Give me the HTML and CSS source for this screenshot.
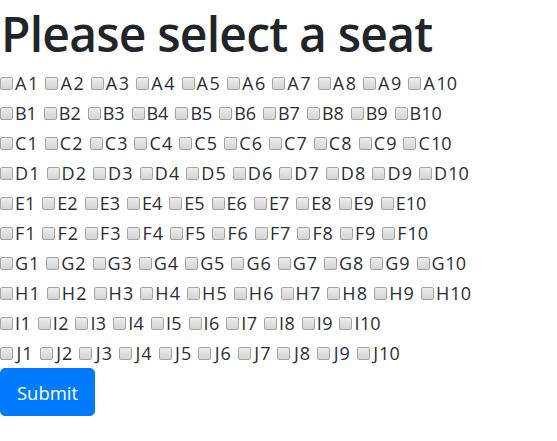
FILE: index.html
```html
<!DOCTYPE html>
<html>
<head>
<meta charset="utf-8">
<link rel="stylesheet" href="styles.css">
</head>
<body>
<h1 class="title">Please select a seat</h1>
<form class="seats"></form>
<script>
(function(){
  var form = document.querySelector('.seats');
  'ABCDEFGHIJ'.split('').forEach(function(r){
    var row = document.createElement('div');
    row.className = 'row row-' + r.toLowerCase();
    for (var i = 1; i <= 10; i++) {
      var s = document.createElement('label');
      s.className = 'seat';
      s.innerHTML = '<input type="checkbox" class="cb" name="seat" value="' + r + i + '"><span class="name"><span class="ltr">' + r + '</span>' + i + '</span>';
      row.appendChild(s);
    }
    form.appendChild(row);
  });
  var b = document.createElement('button');
  b.className = 'btn';
  b.type = 'button';
  b.textContent = 'Submit';
  form.appendChild(b);
})();
</script>
</body>
</html>
```
FILE: styles.css
```css
html, body {
  margin: 0;
  padding: 0;
  background: #fff;
}
body {
  font-family: "Open Sans", "Noto Sans", sans-serif;
  color: #212529;
  font-size: 18px;
}
.title {
  margin: 0;
  font-family: "Open Sans", sans-serif;
  font-weight: 600;
  font-size: 48px;
  line-height: 68px;
  height: 68px;
  padding-left: 1px;
  letter-spacing: -0.8px;
}
.seats {
  display: flex;
  flex-direction: column;
  align-items: flex-start;
}
.row {
  display: flex;
  align-items: center;
  height: 30px;
}
.seat {
  display: inline-flex;
  align-items: center;
  margin-right: 7px;
  font-size: 18px;
}
.cb {
  -webkit-appearance: none;
  appearance: none;
  width: 13px;
  height: 13px;
  margin: 0 2px 0 0;
  border: 1px solid #a3a3a3;
  border-radius: 2px;
  background: linear-gradient(#ececec, #d4d4d4);
  box-sizing: border-box;
}
.name {
  line-height: 24px;
  color: #2b2f33;
}
.ltr { display: inline-block; }
.row-a .ltr { margin-right: 1.7px; }
.row-b .ltr { margin-right: -0.1px; }
.row-c .ltr { margin-right: 1.2px; }
.row-d .ltr { margin-right: 1.2px; }
.row-e .ltr { margin-right: 0; }
.row-f .ltr { margin-right: 0.9px; }
.row-g .ltr { margin-right: 0.9px; }
.row-h .ltr { margin-right: 1.2px; }
.row-i .ltr { margin-right: 0.4px; }
.row-j .ltr { margin-left: 1.5px; margin-right: 1px; }
.btn {
  margin-top: 0;
  height: 48px;
  width: 95px;
  padding: 0;
  font-family: "Open Sans", sans-serif;
  font-size: 18.5px;
  color: #fff;
  background: #007bff;
  border: 1px solid #007bff;
  border-radius: 5px;
}
```
